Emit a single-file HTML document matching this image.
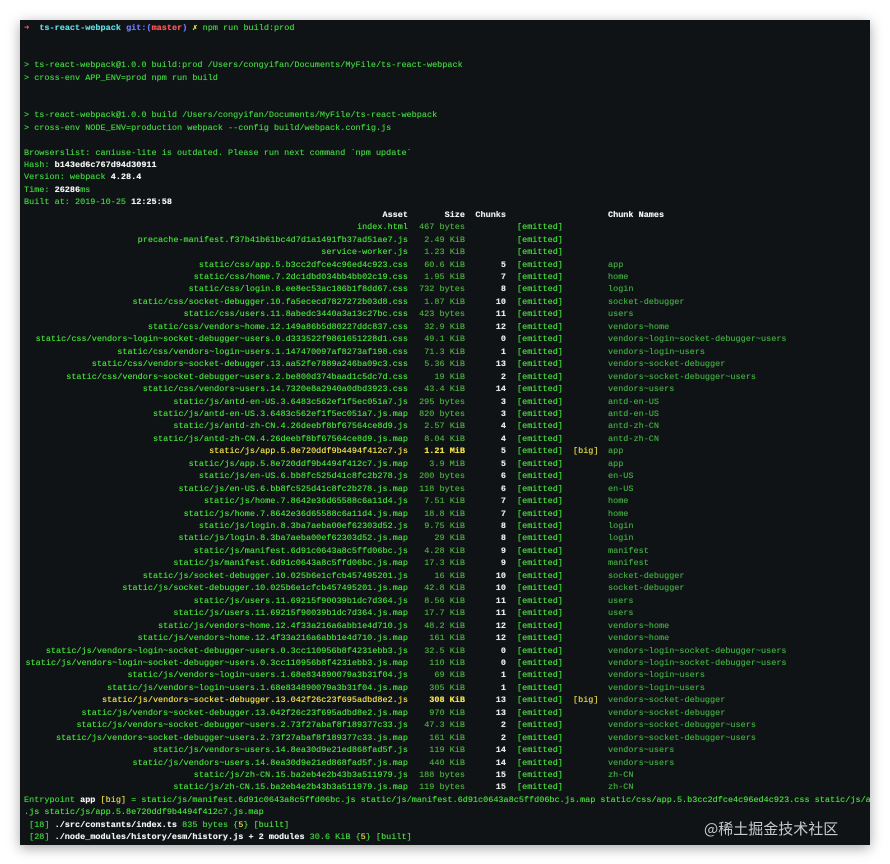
<!DOCTYPE html>
<html><head><meta charset="utf-8"><style>
html,body{margin:0;padding:0;background:#fff;width:890px;height:864px;overflow:hidden}
#t{position:absolute;left:20px;top:20px;width:850px;height:825px;background:#0f1315;box-shadow:0 3px 12px rgba(0,0,0,.35);overflow:hidden}
.l{position:absolute;left:4px;height:12.45px;line-height:12.45px;font-family:"Liberation Mono",monospace;font-size:8.5px;white-space:pre;color:#3fcf3f;text-shadow:0 0 0.4px currentColor}
.r{position:absolute;height:12.45px;line-height:12.45px;font-family:"Liberation Mono",monospace;font-size:8.5px;white-space:pre;text-shadow:0 0 0.4px currentColor}
.a{right:462px;color:#45dc3a;text-align:right}
.s{right:405px;color:#4aa83e}
.c{right:364px;color:#e8e8e8;font-weight:bold}
.e{left:497px;color:#45dc3a}
.bg{left:553px;color:#e5d84a}
.n{left:588px;color:#3fa840}
.y{color:#f0e24e!important}
.w{color:#f2f2f2;font-weight:bold}
#wm{position:absolute;left:704px;top:818px;font-family:"Noto Sans CJK SC",sans-serif;font-size:15px;color:#c9c9c9}
</style></head><body>
<div id="t"></div>
<div id="wm">@稀土掘金技术社区</div>
<script>
var T=document.getElementById('t');var top0=2;var LH=12.45;
function line(i,html){var d=document.createElement('div');d.className='l';d.style.top=(top0+(i-1)*LH)+'px';d.innerHTML=html;T.appendChild(d);}
line(1,'<span style="color:#ff5555;font-weight:bold">➜</span>  <span style="color:#5fd7e0;font-weight:bold">ts-react-webpack</span> <span style="color:#6b78ff;font-weight:bold">git:(</span><span style="color:#ff5555;font-weight:bold">master</span><span style="color:#6b78ff;font-weight:bold">)</span> <span style="color:#f0e24e;font-weight:bold">✗</span> <span style="color:#3fcf3f">npm run build:prod</span>');
line(4,'&gt; ts-react-webpack@1.0.0 build:prod /Users/congyifan/Documents/MyFile/ts-react-webpack');
line(5,'&gt; cross-env APP_ENV=prod npm run build');
line(8,'&gt; ts-react-webpack@1.0.0 build /Users/congyifan/Documents/MyFile/ts-react-webpack');
line(9,'&gt; cross-env NODE_ENV=production webpack --config build/webpack.config.js');
line(11,'Browserslist: caniuse-lite is outdated. Please run next command `npm update`');
line(12,'Hash: <span class="w">b143ed6c767d94d30911</span>');
line(13,'Version: webpack <span class="w">4.28.4</span>');
line(14,'Time: <span class="w">26286</span>ms');
line(15,'Built at: 2019-10-25 <span class="w">12:25:58</span>');
var rows=[
["index.html","467 bytes","",""],
["precache-manifest.f37b41b61bc4d7d1a1491fb37ad51ae7.js","2.49 KiB","",""],
["service-worker.js","1.23 KiB","",""],
["static/css/app.5.b3cc2dfce4c96ed4c923.css","60.6 KiB","5","app"],
["static/css/home.7.2dc1dbd034bb4bb02c19.css","1.95 KiB","7","home"],
["static/css/login.8.ee8ec53ac186b1f8dd67.css","732 bytes","8","login"],
["static/css/socket-debugger.10.fa5ececd7827272b03d8.css","1.87 KiB","10","socket-debugger"],
["static/css/users.11.8abedc3440a3a13c27bc.css","423 bytes","11","users"],
["static/css/vendors~home.12.149a86b5d80227ddc837.css","32.9 KiB","12","vendors~home"],
["static/css/vendors~login~socket-debugger~users.0.d333522f9861651228d1.css","49.1 KiB","0","vendors~login~socket-debugger~users"],
["static/css/vendors~login~users.1.147470097af8273af198.css","71.3 KiB","1","vendors~login~users"],
["static/css/vendors~socket-debugger.13.aa52fe7889a246ba09c3.css","5.36 KiB","13","vendors~socket-debugger"],
["static/css/vendors~socket-debugger~users.2.be800d374baad1c5dc7d.css","19 KiB","2","vendors~socket-debugger~users"],
["static/css/vendors~users.14.7320e8a2940a0dbd3923.css","43.4 KiB","14","vendors~users"],
["static/js/antd-en-US.3.6483c562ef1f5ec051a7.js","295 bytes","3","antd-en-US"],
["static/js/antd-en-US.3.6483c562ef1f5ec051a7.js.map","820 bytes","3","antd-en-US"],
["static/js/antd-zh-CN.4.26deebf8bf67564ce8d9.js","2.57 KiB","4","antd-zh-CN"],
["static/js/antd-zh-CN.4.26deebf8bf67564ce8d9.js.map","8.04 KiB","4","antd-zh-CN"],
["static/js/app.5.8e720ddf9b4494f412c7.js","1.21 MiB","5","app",1],
["static/js/app.5.8e720ddf9b4494f412c7.js.map","3.9 MiB","5","app"],
["static/js/en-US.6.bb8fc525d41c8fc2b278.js","200 bytes","6","en-US"],
["static/js/en-US.6.bb8fc525d41c8fc2b278.js.map","118 bytes","6","en-US"],
["static/js/home.7.8642e36d65588c6a11d4.js","7.51 KiB","7","home"],
["static/js/home.7.8642e36d65588c6a11d4.js.map","18.8 KiB","7","home"],
["static/js/login.8.3ba7aeba00ef62303d52.js","9.75 KiB","8","login"],
["static/js/login.8.3ba7aeba00ef62303d52.js.map","29 KiB","8","login"],
["static/js/manifest.6d91c0643a8c5ffd06bc.js","4.28 KiB","9","manifest"],
["static/js/manifest.6d91c0643a8c5ffd06bc.js.map","17.3 KiB","9","manifest"],
["static/js/socket-debugger.10.025b6e1cfcb457495201.js","16 KiB","10","socket-debugger"],
["static/js/socket-debugger.10.025b6e1cfcb457495201.js.map","42.8 KiB","10","socket-debugger"],
["static/js/users.11.69215f90039b1dc7d364.js","8.56 KiB","11","users"],
["static/js/users.11.69215f90039b1dc7d364.js.map","17.7 KiB","11","users"],
["static/js/vendors~home.12.4f33a216a6abb1e4d710.js","48.2 KiB","12","vendors~home"],
["static/js/vendors~home.12.4f33a216a6abb1e4d710.js.map","161 KiB","12","vendors~home"],
["static/js/vendors~login~socket-debugger~users.0.3cc110956b8f4231ebb3.js","32.5 KiB","0","vendors~login~socket-debugger~users"],
["static/js/vendors~login~socket-debugger~users.0.3cc110956b8f4231ebb3.js.map","110 KiB","0","vendors~login~socket-debugger~users"],
["static/js/vendors~login~users.1.68e834890079a3b31f04.js","69 KiB","1","vendors~login~users"],
["static/js/vendors~login~users.1.68e834890079a3b31f04.js.map","305 KiB","1","vendors~login~users"],
["static/js/vendors~socket-debugger.13.042f26c23f695adbd8e2.js","308 KiB","13","vendors~socket-debugger",1],
["static/js/vendors~socket-debugger.13.042f26c23f695adbd8e2.js.map","970 KiB","13","vendors~socket-debugger"],
["static/js/vendors~socket-debugger~users.2.73f27abaf8f189377c33.js","47.3 KiB","2","vendors~socket-debugger~users"],
["static/js/vendors~socket-debugger~users.2.73f27abaf8f189377c33.js.map","161 KiB","2","vendors~socket-debugger~users"],
["static/js/vendors~users.14.8ea30d9e21ed868fad5f.js","119 KiB","14","vendors~users"],
["static/js/vendors~users.14.8ea30d9e21ed868fad5f.js.map","440 KiB","14","vendors~users"],
["static/js/zh-CN.15.ba2eb4e2b43b3a511979.js","188 bytes","15","zh-CN"],
["static/js/zh-CN.15.ba2eb4e2b43b3a511979.js.map","119 bytes","15","zh-CN"]];
function sp(cls,txt,t){var s=document.createElement('span');s.className='r '+cls;s.style.top=t+'px';s.textContent=txt;T.appendChild(s);return s;}
var ht=top0+15*LH;
sp('a w','Asset',ht);sp('s w','Size',ht);sp('c','Chunks',ht);sp('n w','Chunk Names',ht);
rows.forEach(function(r,i){var t=top0+(16+i)*LH;var y=r[4]?' y':'';
sp('a'+y,r[0],t);var s=sp('s'+y,r[1],t);if(y)s.style.fontWeight='bold';sp('c',r[2],t);sp('e','[emitted]',t);if(y)sp('bg','[big]',t);sp('n',r[3],t);});
line(63,'Entrypoint <span class="w">app</span> <span style="color:#e5d84a">[big]</span> = <span style="color:#45dc3a">static/js/manifest.6d91c0643a8c5ffd06bc.js static/js/manifest.6d91c0643a8c5ffd06bc.js.map static/css/app.5.b3cc2dfce4c96ed4c923.css static/js/app.5.8e720ddf9b4494f412c7</span>');
line(64,'<span style="color:#45dc3a">.js static/js/app.5.8e720ddf9b4494f412c7.js.map</span>');
line(65,' [18] <span class="w">./src/constants/index.ts</span> 835 bytes {<span style="color:#e5d84a">5</span>} <span style="color:#45dc3a">[built]</span>');
line(66,' [28] <span class="w">./node_modules/history/esm/history.js + 2 modules</span> 30.6 KiB {<span style="color:#e5d84a">5</span>} <span style="color:#45dc3a">[built]</span>');
</script>
</body></html>
